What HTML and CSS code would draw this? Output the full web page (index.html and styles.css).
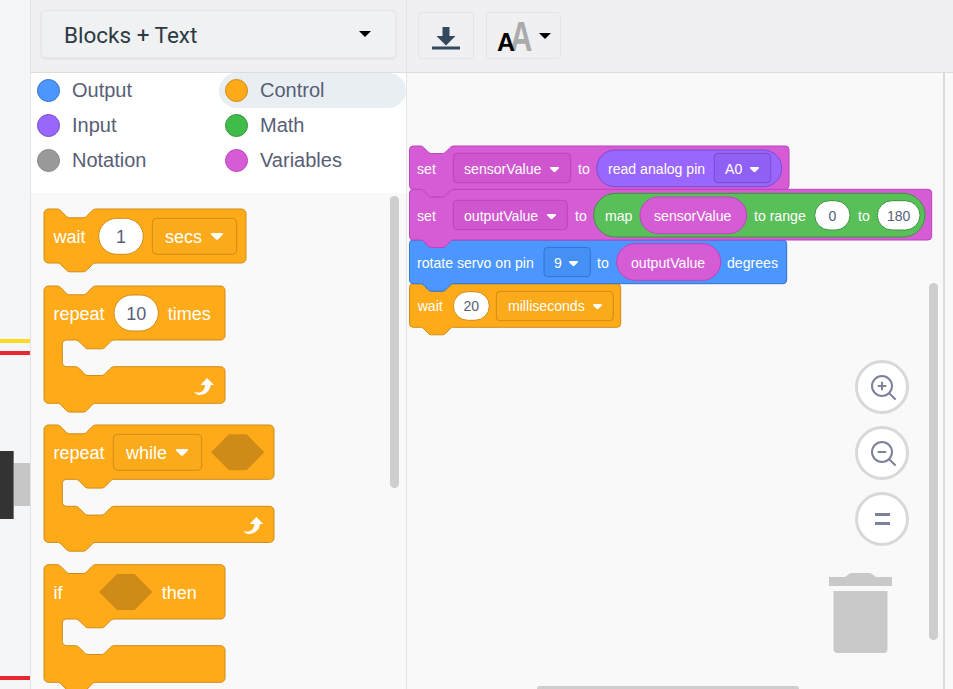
FILE: index.html
```html
<!DOCTYPE html>
<html lang="en">
<head>
    <meta charset="UTF-8">
    <meta name="viewport" content="width=device-width, initial-scale=1.0">
    <title>Blocks + Text</title>
    <link rel="stylesheet" href="styles.css">
</head>
<body>
    <div class="circuit">
        <div class="wire wire-yellow"></div>
        <div class="wire wire-red-top"></div>
        <div class="wire wire-red-bottom"></div>
        <div class="servo-body"></div>
        <div class="servo-shaft"></div>
    </div>

    <div class="editor">
        <div class="toolbar">
            <div class="mode-cell">
                <button class="mode-select">
                    <span class="mode-label">Blocks + Text</span>
                    <span class="caret"></span>
                </button>
            </div>
            <div class="tools">
                <button class="tool-btn download-btn">
                    <svg width="28" height="23" viewBox="0 0 28 23">
                        <path fill="#34495e" d="M10.5,0h7v9h6l-9.500,9.500l-9.500,-9.500h6z"/>
                        <rect y="19.500" width="28" height="3" fill="#34495e"/>
                    </svg>
                </button>
                <button class="tool-btn font-btn">
                    <span class="font-small">A</span>
                    <span class="font-big">A</span>
                    <span class="caret"></span>
                </button>
            </div>
        </div>

        <div class="main">
            <div class="palette">
                <div class="categories">
                    <div class="category"><span class="dot dot-output"></span>Output</div>
                    <div class="category selected"><span class="dot dot-control"></span>Control</div>
                    <div class="category"><span class="dot dot-input"></span>Input</div>
                    <div class="category"><span class="dot dot-math"></span>Math</div>
                    <div class="category"><span class="dot dot-notation"></span>Notation</div>
                    <div class="category"><span class="dot dot-variables"></span>Variables</div>
                </div>
                <div class="flyout">
                    <svg class="canvas" width="375" height="496" viewBox="31 193 375 496">
                        <defs>
                            <path id="arrow" d="M1,0H11C12,0 12.500,1 11.800,1.800L7.200,6.300C6.500,7 5.500,7 4.800,6.300L0.200,1.800C-0.500,1 0,0 1,0z"/>
                            <path id="loop" d="M13,0L20,7H16.500C16.500,13 11,17 5.500,17C3,17 1,15.500 0,14C3,15 5,14.500 7,14C9.500,13 11,10 11,7H6.500z"/>
                        </defs>

                        <path class="orange" transform="translate(44,209)" d="M0,4.400a4.400,4.400 0 0 1 4.400,-4.400H13c2,0 3.300,1 4.300,2.200l4.300,4.400c1.100,1.100 2.200,2.200 4.300,2.200h13c2.200,0 3.300,-1.100 4.300,-2.200l4.300,-4.400c1.100,-1.100 2.200,-2.200 4.300,-2.200H197.600a4.400,4.400 0 0 1 4.400,4.400V49.600a4.400,4.400 0 0 1 -4.400,4.400H52c-2,0 -3.300,1 -4.300,2.200l-4.300,4.400c-1.100,1.100 -2.200,2.200 -4.300,2.200h-13c-2.200,0 -3.300,-1.100 -4.300,-2.200l-4.300,-4.400c-1.100,-1.100 -2.200,-2.200 -4.300,-2.200H4.400a4.400,4.400 0 0 1 -4.400,-4.400z"/>
                        <text class="lbl" x="53.500" y="243">wait</text>
                        <rect class="pill" x="98.700" y="218.300" width="44.600" height="36" rx="18"/>
                        <text class="val" x="121" y="243" text-anchor="middle">1</text>
                        <rect class="drop-orange" x="152.300" y="218.300" width="84.400" height="36" rx="4.400"/>
                        <text class="lbl" x="165" y="243">secs</text>
                        <use href="#arrow" x="211" y="233" fill="#fff"/>

                        <path class="orange" transform="translate(44,286)" d="M0,4.400a4.400,4.400 0 0 1 4.400,-4.400H13c2,0 3.300,1 4.300,2.200l4.300,4.400c1.100,1.100 2.200,2.200 4.300,2.200h13c2.200,0 3.300,-1.100 4.300,-2.200l4.300,-4.400c1.100,-1.100 2.200,-2.200 4.300,-2.200H176.600a4.400,4.400 0 0 1 4.400,4.400V49.600a4.400,4.400 0 0 1 -4.400,4.400H70.300c-2,0 -3.300,1 -4.300,2.200l-4.300,4.400c-1.100,1.100 -2.200,2.200 -4.300,2.200h-13c-2.200,0 -3.300,-1.100 -4.300,-2.200l-4.300,-4.400c-1.100,-1.100 -2.200,-2.200 -4.300,-2.200H22.700a4.400,4.400 0 0 0 -4.400,4.400V76.300a4.400,4.400 0 0 0 4.400,4.400H31.300c2,0 3.300,1 4.300,2.200l4.300,4.400c1.100,1.100 2.200,2.200 4.300,2.200h13c2.200,0 3.300,-1.100 4.300,-2.200l4.300,-4.400c1.100,-1.100 2.200,-2.200 4.300,-2.200H176.600a4.400,4.400 0 0 1 4.400,4.400V112.900a4.400,4.400 0 0 1 -4.400,4.400H52c-2,0 -3.300,1 -4.300,2.200l-4.300,4.400c-1.100,1.100 -2.200,2.200 -4.300,2.200h-13c-2.200,0 -3.300,-1.100 -4.300,-2.200l-4.300,-4.400c-1.100,-1.100 -2.200,-2.200 -4.300,-2.200H4.400a4.400,4.400 0 0 1 -4.400,-4.400z"/>
                        <text class="lbl" x="53.500" y="320">repeat</text>
                        <rect class="pill" x="114" y="295" width="44.300" height="36" rx="18"/>
                        <text class="val" x="136.200" y="320" text-anchor="middle">10</text>
                        <text class="lbl" x="167.700" y="320">times</text>
                        <use href="#loop" x="194" y="378" fill="#fff"/>

                        <path class="orange" transform="translate(44,425)" d="M0,4.400a4.400,4.400 0 0 1 4.400,-4.400H13c2,0 3.300,1 4.300,2.200l4.300,4.400c1.100,1.100 2.200,2.200 4.300,2.200h13c2.200,0 3.300,-1.100 4.300,-2.200l4.300,-4.400c1.100,-1.100 2.200,-2.200 4.300,-2.200H225.600a4.400,4.400 0 0 1 4.400,4.400V49.900a4.400,4.400 0 0 1 -4.400,4.400H70.300c-2,0 -3.300,1 -4.300,2.200l-4.300,4.400c-1.100,1.100 -2.200,2.200 -4.300,2.200h-13c-2.200,0 -3.300,-1.100 -4.300,-2.200l-4.300,-4.400c-1.100,-1.100 -2.200,-2.200 -4.300,-2.200H22.700a4.400,4.400 0 0 0 -4.400,4.400V76.900a4.400,4.400 0 0 0 4.400,4.400H31.300c2,0 3.300,1 4.300,2.200l4.300,4.400c1.100,1.100 2.200,2.200 4.300,2.200h13c2.200,0 3.300,-1.100 4.300,-2.200l4.300,-4.400c1.100,-1.100 2.200,-2.200 4.300,-2.200H225.600a4.400,4.400 0 0 1 4.400,4.400V113a4.400,4.400 0 0 1 -4.400,4.400H52c-2,0 -3.300,1 -4.300,2.200l-4.300,4.400c-1.100,1.100 -2.200,2.200 -4.300,2.200h-13c-2.200,0 -3.300,-1.100 -4.300,-2.200l-4.300,-4.400c-1.100,-1.100 -2.200,-2.200 -4.300,-2.200H4.400a4.400,4.400 0 0 1 -4.400,-4.400z"/>
                        <text class="lbl" x="53.500" y="459">repeat</text>
                        <rect class="drop-orange" x="113.300" y="434.300" width="88.400" height="36" rx="4.400"/>
                        <text class="lbl" x="126" y="459">while</text>
                        <use href="#arrow" x="176" y="449" fill="#fff"/>
                        <polygon class="hole" points="211,452.300 229,434.300 246.700,434.300 264.300,452.300 246.700,470.300 229,470.300"/>
                        <use href="#loop" x="243.300" y="517" fill="#fff"/>

                        <path class="orange" transform="translate(44,564.700)" d="M0,4.400a4.400,4.400 0 0 1 4.400,-4.400H13c2,0 3.300,1 4.300,2.200l4.300,4.400c1.100,1.100 2.200,2.200 4.300,2.200h13c2.200,0 3.300,-1.100 4.300,-2.200l4.300,-4.400c1.100,-1.100 2.200,-2.200 4.300,-2.200H176.600a4.400,4.400 0 0 1 4.400,4.400V49.900a4.400,4.400 0 0 1 -4.400,4.400H70.300c-2,0 -3.300,1 -4.300,2.200l-4.300,4.400c-1.100,1.100 -2.200,2.200 -4.300,2.200h-13c-2.200,0 -3.300,-1.100 -4.300,-2.200l-4.300,-4.400c-1.100,-1.100 -2.200,-2.200 -4.300,-2.200H22.700a4.400,4.400 0 0 0 -4.400,4.400V76.600a4.400,4.400 0 0 0 4.400,4.400H31.300c2,0 3.300,1 4.300,2.200l4.300,4.400c1.100,1.100 2.200,2.200 4.300,2.200h13c2.200,0 3.300,-1.100 4.300,-2.200l4.300,-4.400c1.100,-1.100 2.200,-2.200 4.300,-2.200H176.600a4.400,4.400 0 0 1 4.400,4.400V113.200a4.400,4.400 0 0 1 -4.400,4.400H52c-2,0 -3.300,1 -4.300,2.200l-4.300,4.400c-1.100,1.100 -2.200,2.200 -4.300,2.200h-13c-2.200,0 -3.300,-1.100 -4.300,-2.200l-4.300,-4.400c-1.100,-1.100 -2.200,-2.200 -4.300,-2.200H4.400a4.400,4.400 0 0 1 -4.400,-4.400z"/>
                        <text class="lbl" x="53.500" y="599">if</text>
                        <polygon class="hole" points="99,592 117,574 134.700,574 152.300,592 134.700,610 117,610"/>
                        <text class="lbl" x="161.700" y="599">then</text>
                    </svg>
                    <div class="scroll-flyout"></div>
                </div>
            </div>

            <div class="workspace">
                <svg class="canvas" width="536" height="616" viewBox="407 73 536 616">
                    <defs>
                        <path id="arrow-sm" d="M0.800,0H8.200C9,0 9.400,0.800 8.800,1.400L5.400,4.800C4.900,5.300 4.100,5.300 3.600,4.800L0.200,1.400C-0.400,0.800 0,0 0.800,0z"/>
                    </defs>

                    <path class="orange" transform="translate(409.500,283.700)" d="M0,3.700a3.700,3.700 0 0 1 3.700,-3.700H11c1.700,0 2.800,.85 3.650,1.900l3.650,3.700c.95,.95 1.900,1.900 3.650,1.900h11c1.900,0 2.800,-.95 3.650,-1.900l3.650,-3.700c.95,-.95 1.900,-1.900 3.650,-1.900H207.500a3.700,3.700 0 0 1 3.700,3.700V39.900a3.700,3.700 0 0 1 -3.700,3.700H43.900c-1.700,0 -2.800,.85 -3.650,1.900l-3.650,3.700c-.95,.95 -1.900,1.900 -3.650,1.900h-11c-1.900,0 -2.800,-.95 -3.650,-1.900l-3.650,-3.700c-.95,-.95 -1.900,-1.900 -3.650,-1.900H3.700a3.700,3.700 0 0 1 -3.700,-3.700z"/>
                    <text class="lbl-sm" x="417.700" y="311">wait</text>
                    <rect class="pill" x="453.300" y="291.700" width="36" height="28.600" rx="14.300"/>
                    <text class="val-sm" x="471.300" y="311" text-anchor="middle">20</text>
                    <rect class="drop-orange" x="496.300" y="291.300" width="117" height="29.400" rx="3.700"/>
                    <text class="lbl-sm" x="508" y="311">milliseconds</text>
                    <use href="#arrow-sm" x="593" y="304" fill="#fff"/>

                    <path class="blue" transform="translate(409.500,240)" d="M0,3.700a3.700,3.700 0 0 1 3.700,-3.700H11c1.700,0 2.800,.85 3.650,1.900l3.650,3.700c.95,.95 1.900,1.900 3.650,1.900h11c1.900,0 2.800,-.95 3.650,-1.900l3.650,-3.700c.95,-.95 1.900,-1.900 3.650,-1.900H373.500a3.700,3.700 0 0 1 3.700,3.700V40a3.700,3.700 0 0 1 -3.700,3.700H43.900c-1.700,0 -2.800,.85 -3.650,1.900l-3.650,3.700c-.95,.95 -1.900,1.900 -3.650,1.900h-11c-1.900,0 -2.800,-.95 -3.650,-1.900l-3.650,-3.700c-.95,-.95 -1.900,-1.900 -3.650,-1.900H3.700a3.700,3.700 0 0 1 -3.700,-3.700z"/>
                    <text class="lbl-sm" x="417" y="268">rotate servo on pin</text>
                    <rect class="drop-blue" x="544" y="247.300" width="46.300" height="29.400" rx="3.700"/>
                    <text class="lbl-sm" x="554" y="268">9</text>
                    <use href="#arrow-sm" x="569" y="261" fill="#fff"/>
                    <text class="lbl-sm" x="597" y="268">to</text>
                    <rect class="pink-pill" x="616.700" y="243.700" width="104" height="36.600" rx="18.300"/>
                    <text class="lbl-sm" x="631" y="268">outputValue</text>
                    <text class="lbl-sm" x="727" y="268">degrees</text>

                    <path class="pink" transform="translate(409.500,189.300)" d="M0,3.700a3.700,3.700 0 0 1 3.700,-3.700H11c1.700,0 2.800,.85 3.650,1.900l3.650,3.700c.95,.95 1.900,1.900 3.650,1.900h11c1.900,0 2.800,-.95 3.650,-1.900l3.650,-3.700c.95,-.95 1.900,-1.900 3.650,-1.900H518.500a3.700,3.700 0 0 1 3.700,3.700V47a3.700,3.700 0 0 1 -3.700,3.700H43.900c-1.700,0 -2.800,.85 -3.650,1.900l-3.650,3.700c-.95,.95 -1.900,1.900 -3.650,1.900h-11c-1.900,0 -2.800,-.95 -3.650,-1.900l-3.650,-3.700c-.95,-.95 -1.900,-1.900 -3.650,-1.900H3.700a3.700,3.700 0 0 1 -3.700,-3.700z"/>
                    <text class="lbl-sm" x="417" y="221">set</text>
                    <rect class="drop-pink" x="453.300" y="200.300" width="114" height="29.400" rx="3.700"/>
                    <text class="lbl-sm" x="464" y="221">outputValue</text>
                    <use href="#arrow-sm" x="547" y="214" fill="#fff"/>
                    <text class="lbl-sm" x="575" y="221">to</text>
                    <rect class="green-pill" x="593.700" y="193.300" width="331.300" height="43.700" rx="21.800"/>
                    <text class="lbl-sm" x="605" y="221">map</text>
                    <rect class="pink-pill" x="640" y="197" width="106.700" height="36.700" rx="18.300"/>
                    <text class="lbl-sm" x="654" y="221">sensorValue</text>
                    <text class="lbl-sm" x="754" y="221">to range</text>
                    <rect class="pill-green" x="814.700" y="200.700" width="35.300" height="29.300" rx="14.600"/>
                    <text class="val-sm" x="832.300" y="221" text-anchor="middle">0</text>
                    <text class="lbl-sm" x="858" y="221">to</text>
                    <rect class="pill-green" x="877.300" y="200.700" width="42.700" height="29.300" rx="14.600"/>
                    <text class="val-sm" x="898.700" y="221" text-anchor="middle">180</text>

                    <path class="pink" transform="translate(409.500,146)" d="M0,3.700a3.700,3.700 0 0 1 3.700,-3.700H11c1.700,0 2.800,.85 3.650,1.900l3.650,3.700c.95,.95 1.900,1.900 3.650,1.900h11c1.900,0 2.800,-.95 3.650,-1.900l3.650,-3.700c.95,-.95 1.900,-1.900 3.650,-1.900H375.800a3.700,3.700 0 0 1 3.700,3.700V39.600a3.700,3.700 0 0 1 -3.700,3.700H43.900c-1.700,0 -2.800,.85 -3.650,1.900l-3.650,3.700c-.95,.95 -1.900,1.900 -3.650,1.900h-11c-1.900,0 -2.800,-.95 -3.650,-1.900l-3.650,-3.700c-.95,-.95 -1.900,-1.900 -3.650,-1.900H3.700a3.700,3.700 0 0 1 -3.700,-3.700z"/>
                    <text class="lbl-sm" x="417" y="174">set</text>
                    <rect class="drop-pink" x="453.300" y="153.300" width="117.400" height="29.400" rx="3.700"/>
                    <text class="lbl-sm" x="464" y="174">sensorValue</text>
                    <use href="#arrow-sm" x="550" y="167" fill="#fff"/>
                    <text class="lbl-sm" x="578" y="174">to</text>
                    <rect class="purple-pill" x="596.700" y="150" width="185" height="36.700" rx="18.300"/>
                    <text class="lbl-sm" x="608" y="174">read analog pin</text>
                    <rect class="drop-purple" x="714.300" y="153.300" width="56.400" height="29.400" rx="3.700"/>
                    <text class="lbl-sm" x="725" y="174">A0</text>
                    <use href="#arrow-sm" x="750" y="167" fill="#fff"/>
                </svg>

                <div class="scroll-v"></div>
                <div class="scroll-h"></div>

                <div class="zoom-controls">
                    <button class="zoom-btn">
                        <svg width="26" height="26" viewBox="0 0 26 26">
                            <circle cx="11" cy="11" r="10" class="zoom-line"/>
                            <path class="zoom-line" d="M18.500,18.500L24,24M7.500,11H14.500M11,7.500V14.500"/>
                        </svg>
                    </button>
                    <button class="zoom-btn">
                        <svg width="26" height="26" viewBox="0 0 26 26">
                            <circle cx="11" cy="11" r="10" class="zoom-line"/>
                            <path class="zoom-line" d="M18.500,18.500L24,24M7.500,11H14.500"/>
                        </svg>
                    </button>
                    <button class="zoom-btn">
                        <span class="reset-bars"></span>
                    </button>
                </div>

                <svg class="trash" width="63" height="81" viewBox="0 0 63 81">
                    <path fill="#c9c9c9" d="M0,4H16L20,1C21,0.300 22,0 23,0H40C41,0 42,0.300 43,1L47,4H63V13H0z"/>
                    <path fill="#c9c9c9" d="M4.500,18H58.500V76C58.500,78.500 57,80 54.500,80H8.500C6,80 4.500,78.500 4.500,76z"/>
                </svg>
            </div>
            <div class="gutter"></div>
        </div>
    </div>
</body>
</html>
```

FILE: styles.css
```css
* {
    box-sizing: border-box;
}
body {
    margin: 0;
    height: 100vh;
    display: flex;
    overflow: hidden;
    font-family: "Liberation Sans", Arial, sans-serif;
    background-color: #f9f9f9;
}
button {
    font-family: inherit;
    padding: 0;
}

/* circuit view peeking in at the left */
.circuit {
    position: relative;
    width: 31px;
    flex-shrink: 0;
    background-color: #f4f6f8;
    border-right: 1px solid #e1e3e8;
}
.wire {
    position: absolute;
    left: 0;
    width: 30px;
}
.wire-yellow {
    top: 339px;
    height: 4px;
    background-color: #ffdc1e;
}
.wire-red-top {
    top: 351px;
    height: 4px;
    background-color: #e8282e;
}
.wire-red-bottom {
    top: 676px;
    height: 4px;
    background-color: #e8282e;
}
.servo-body {
    position: absolute;
    left: 0;
    top: 451px;
    width: 14px;
    height: 68px;
    background-color: #333;
    border-right: 1px solid #777;
}
.servo-shaft {
    position: absolute;
    left: 14px;
    top: 463px;
    width: 16px;
    height: 43px;
    background-color: #c6c6c6;
}

.editor {
    flex: 1;
    min-width: 0;
    display: flex;
    flex-direction: column;
}

.toolbar {
    height: 73px;
    flex-shrink: 0;
    display: flex;
    background-color: #f0f0f2;
    border-bottom: 1px solid #dcdde1;
}
.mode-cell {
    width: 376px;
    padding: 10px 10px 0;
    border-right: 1px solid #e3e4e8;
}
.mode-select {
    width: 355px;
    height: 48px;
    padding: 0 24px 0 22px;
    display: flex;
    align-items: center;
    justify-content: space-between;
    font-family: Roboto, sans-serif;
    font-size: 22.500px;
    color: #2c3a44;
    background-color: #f0f1f3;
    border: 1px solid #e6e7ea;
    border-radius: 4px;
    box-shadow: 0 1px 3px rgba(0, 0, 0, 0.08);
}
.mode-label {
    padding-top: 2px;
}
.caret {
    width: 0;
    height: 0;
    border-left: 6px solid transparent;
    border-right: 6px solid transparent;
    border-top: 6px solid #000;
}
.tools {
    display: flex;
    gap: 12px;
    padding: 12px 11px 0;
}
.tool-btn {
    height: 47px;
    display: flex;
    align-items: center;
    justify-content: center;
    background-color: #f0f0f2;
    border: 1px solid #e4e5e8;
    border-radius: 4px;
}
.download-btn {
    width: 56px;
    padding-top: 5px;
}
.font-btn {
    width: 75px;
    padding-left: 10px;
    align-items: flex-end;
    justify-content: flex-start;
}
.font-small {
    position: relative;
    z-index: 1;
    font-size: 25px;
    font-weight: bold;
    line-height: 1;
    margin-bottom: 3px;
    color: #000;
}
.font-big {
    font-size: 31px;
    font-weight: bold;
    line-height: 1;
    margin-left: -5px;
    margin-bottom: 2px;
    color: #aaa;
    transform: scaleY(1.35);
    transform-origin: 50% 85%;
}
.font-btn .caret {
    margin-left: 7px;
    margin-bottom: 19px;
}

.main {
    flex: 1;
    min-height: 0;
    display: flex;
}

.palette {
    width: 376px;
    flex-shrink: 0;
    display: flex;
    flex-direction: column;
    border-right: 1px solid #e3e4e8;
}
.categories {
    height: 120px;
    flex-shrink: 0;
    display: grid;
    grid-template-columns: 188px 187px;
    grid-auto-rows: 35px;
    background-color: #fff;
}
.category {
    display: flex;
    align-items: center;
    gap: 12px;
    padding-left: 6px;
    font-size: 20px;
    color: #575e75;
}
.category.selected {
    background-color: #e9eef2;
    border-radius: 18px;
}
.dot {
    width: 23px;
    height: 23px;
    border-radius: 50%;
    border: 1px solid;
}
.dot-output { background-color: #4c97ff; border-color: #3373cc; }
.dot-control { background-color: #ffab19; border-color: #cf8b17; }
.dot-input { background-color: #9966ff; border-color: #774dcb; }
.dot-math { background-color: #3fbc4a; border-color: #389438; }
.dot-notation { background-color: #999; border-color: #888; }
.dot-variables { background-color: #d65cd6; border-color: #bd42bd; }

.flyout {
    position: relative;
    flex: 1;
    min-height: 0;
    background-color: #f9f9f9;
}
.canvas {
    display: block;
}
.scroll-flyout {
    position: absolute;
    left: 359px;
    top: 3px;
    width: 9px;
    height: 292px;
    background-color: #cecece;
    border-radius: 5px;
}

.workspace {
    position: relative;
    flex: 1;
    min-width: 0;
    background-color: #f9f9f9;
}
.gutter {
    width: 10px;
    flex-shrink: 0;
    background-color: #f9f9f9;
    border-left: 2px solid #dcdde1;
}
.scroll-v {
    position: absolute;
    left: 522px;
    top: 210px;
    width: 9px;
    height: 357px;
    background-color: #cecece;
    border-radius: 5px;
}
.scroll-h {
    position: absolute;
    left: 130px;
    bottom: 0;
    width: 262px;
    height: 3px;
    background-color: #cecece;
    border-radius: 3px 3px 0 0;
}

.zoom-controls {
    position: absolute;
    left: 448px;
    top: 287px;
    display: flex;
    flex-direction: column;
    gap: 12px;
}
.zoom-btn {
    width: 54px;
    height: 54px;
    display: flex;
    align-items: center;
    justify-content: center;
    background-color: #fff;
    border: 3px solid #d8d8d8;
    border-radius: 50%;
}
.zoom-btn svg {
    margin: 2px 0 0 3px;
}
.zoom-line {
    fill: none;
    stroke: #7c8299;
    stroke-width: 2;
    stroke-linecap: round;
}
.reset-bars {
    width: 15px;
    height: 12px;
    border-top: 3.500px solid #7c8299;
    border-bottom: 3.500px solid #7c8299;
}
.trash {
    position: absolute;
    left: 422px;
    top: 500px;
}

/* block shapes */
.orange { fill: #ffab19; stroke: #cf8b17; }
.blue { fill: #4c97ff; stroke: #3373cc; }
.pink { fill: #d65cd6; stroke: #bd42bd; }
.pill { fill: #fff; stroke: #cf8b17; }
.pill-green { fill: #fff; stroke: #389438; }
.hole { fill: #cf8b17; }
.pink-pill { fill: #d65cd6; stroke: #bd42bd; }
.green-pill { fill: #59c059; stroke: #389438; }
.purple-pill { fill: #9966ff; stroke: #774dcb; }
.drop-orange { fill: #fbaa19; stroke: #cf8b17; }
.drop-blue { fill: #4590f5; stroke: #3373cc; }
.drop-pink { fill: #cf56cf; stroke: #bd42bd; }
.drop-purple { fill: #9060f5; stroke: #774dcb; }

.lbl {
    fill: #fff;
    font-size: 18px;
}
.val {
    fill: #575e75;
    font-size: 18px;
}
.lbl-sm {
    fill: #fff;
    font-size: 14.100px;
}
.val-sm {
    fill: #575e75;
    font-size: 14.100px;
}
```
